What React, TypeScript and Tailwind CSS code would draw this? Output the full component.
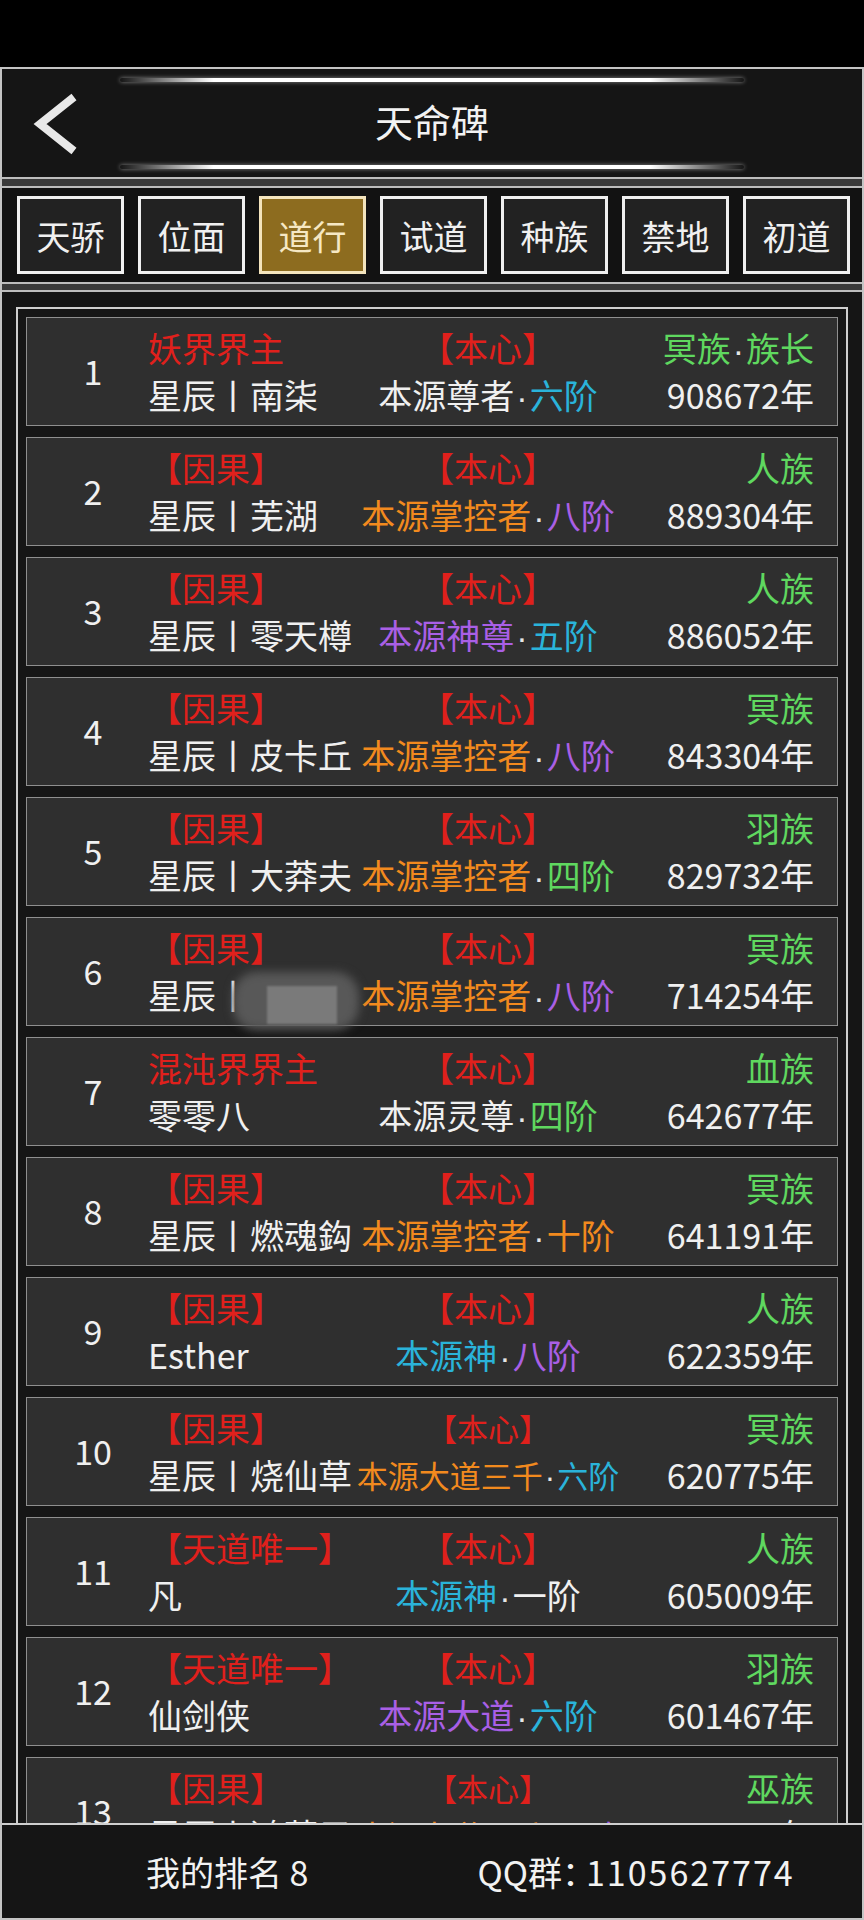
import React from "react";

type Seg = [string, string];

const RED = "text-[#e0201c]";
const GRN = "text-[#5fd85f]";
const CYN = "text-[#2ab3da]";
const ORG = "text-[#f28a1e]";
const PUR = "text-[#a95fe6]";
const WHT = "text-[#f0f0f0]";
const DOT = "dot";

interface RankRow {
  n: number;
  a: Seg[];
  b: Seg[];
  c: Seg[];
  d: Seg[];
  e: Seg[];
  f: Seg[];
  small?: boolean;
  blur?: boolean;
}

const yinguo: Seg[] = [["【因果】", RED]];
const benxin: Seg[] = [["【本心】", RED]];
const tiandao: Seg[] = [["【天道唯一】", RED]];
const dot: Seg = ["·", DOT];

const rows: RankRow[] = [
  { n: 1, a: [["妖界界主", RED]], b: benxin, c: [["冥族", GRN], dot, ["族长", GRN]], d: [["星辰丨南柒", WHT]], e: [["本源尊者", WHT], dot, ["六阶", CYN]], f: [["908672年", WHT]] },
  { n: 2, a: yinguo, b: benxin, c: [["人族", GRN]], d: [["星辰丨芜湖", WHT]], e: [["本源掌控者", ORG], dot, ["八阶", PUR]], f: [["889304年", WHT]] },
  { n: 3, a: yinguo, b: benxin, c: [["人族", GRN]], d: [["星辰丨零天樽", WHT]], e: [["本源神尊", PUR], dot, ["五阶", CYN]], f: [["886052年", WHT]] },
  { n: 4, a: yinguo, b: benxin, c: [["冥族", GRN]], d: [["星辰丨皮卡丘", WHT]], e: [["本源掌控者", ORG], dot, ["八阶", PUR]], f: [["843304年", WHT]] },
  { n: 5, a: yinguo, b: benxin, c: [["羽族", GRN]], d: [["星辰丨大莽夫", WHT]], e: [["本源掌控者", ORG], dot, ["四阶", GRN]], f: [["829732年", WHT]] },
  { n: 6, a: yinguo, b: benxin, c: [["冥族", GRN]], d: [["星辰丨", WHT]], e: [["本源掌控者", ORG], dot, ["八阶", PUR]], f: [["714254年", WHT]], blur: true },
  { n: 7, a: [["混沌界界主", RED]], b: benxin, c: [["血族", GRN]], d: [["零零八", WHT]], e: [["本源灵尊", WHT], dot, ["四阶", GRN]], f: [["642677年", WHT]] },
  { n: 8, a: yinguo, b: benxin, c: [["冥族", GRN]], d: [["星辰丨燃魂鈎", WHT]], e: [["本源掌控者", ORG], dot, ["十阶", ORG]], f: [["641191年", WHT]] },
  { n: 9, a: yinguo, b: benxin, c: [["人族", GRN]], d: [["Esther", WHT]], e: [["本源神", CYN], dot, ["八阶", PUR]], f: [["622359年", WHT]] },
  { n: 10, a: yinguo, b: benxin, c: [["冥族", GRN]], d: [["星辰丨烧仙草", WHT]], e: [["本源大道三千", ORG], dot, ["六阶", CYN]], f: [["620775年", WHT]], small: true },
  { n: 11, a: tiandao, b: benxin, c: [["人族", GRN]], d: [["凡", WHT]], e: [["本源神", CYN], dot, ["一阶", WHT]], f: [["605009年", WHT]] },
  { n: 12, a: tiandao, b: benxin, c: [["羽族", GRN]], d: [["仙剑侠", WHT]], e: [["本源大道", PUR], dot, ["六阶", CYN]], f: [["601467年", WHT]] },
  { n: 13, a: yinguo, b: benxin, c: [["巫族", GRN]], d: [["星辰丨鸿蒙子", WHT]], e: [["本源大道三千", ORG], dot, ["八阶", PUR]], f: [["598830年", WHT]], small: true },
];

const tabs = ["天骄", "位面", "道行", "试道", "种族", "禁地", "初道"];

function Segs({ segs }: { segs: Seg[] }) {
  return (
    <>
      {segs.map(([t, c], i) =>
        c === DOT ? (
          <span key={i} className="px-[2px] font-['Liberation_Sans',sans-serif] text-[#e6e6e6]">
            {t}
          </span>
        ) : (
          <span key={i} className={c}>
            {t}
          </span>
        ),
      )}
    </>
  );
}

function Row({ r }: { r: RankRow }) {
  return (
    <div className="relative flex h-[109px] shrink-0 border border-[#8f8f8f] bg-[#2f2f2f]">
      <div className="flex w-[121px] items-center justify-center pb-[2px] pl-[11px] text-[34px] text-[#f0f0f0]">
        {r.n}
      </div>
      <div className="grid flex-1 grid-cols-[202px_276px_1fr] grid-rows-[47px_47px] content-start whitespace-nowrap pr-[23px] pt-[6px] text-[34px] leading-[47px]">
        <div>
          <Segs segs={r.a} />
        </div>
        <div className={r.small ? "text-center text-[31px]" : "text-center"}>
          <Segs segs={r.b} />
        </div>
        <div className="text-right">
          <Segs segs={r.c} />
        </div>
        <div>
          <Segs segs={r.d} />
        </div>
        <div className={r.small ? "text-center text-[31px]" : "text-center"}>
          <Segs segs={r.e} />
        </div>
        <div className="text-right">
          <Segs segs={r.f} />
        </div>
      </div>
      {r.blur && (
        <div className="absolute left-[206px] top-[54px] h-[58px] w-[126px]">
          <div className="absolute inset-0 rounded-[24px] bg-[#585858] blur-[5px]" />
          <div className="absolute left-[34px] top-[14px] h-[38px] w-[70px] bg-[#7a7a7a] blur-[1px]" />
        </div>
      )}
    </div>
  );
}

function GlowLine() {
  return (
    <div className="mx-auto h-[4px] w-[624px] rounded-full bg-[linear-gradient(90deg,transparent,#ffffff_15%,#ffffff_85%,transparent)] shadow-[0_0_4px_rgba(255,255,255,0.5)]" />
  );
}

export default function App() {
  return (
    <div className="flex h-[1920px] w-[864px] flex-col bg-black font-['Noto_Sans_CJK_SC','Noto_Sans',sans-serif]">
      <div className="h-[67px] shrink-0 bg-black" />
      <div className="flex min-h-0 flex-1 flex-col border-2 border-[#c4c4c4] bg-[#151515]">
        {/* header */}
        <div className="relative flex h-[108px] shrink-0 flex-col justify-between pb-[8px] pt-[9px]">
          <GlowLine />
          <div className="flex items-center justify-center pb-[6px] text-[38px] leading-none text-[#f2f2f2]">天命碑</div>
          <GlowLine />
          <button className="absolute left-[30px] top-[24px]">
            <svg width="50" height="64" viewBox="0 0 50 64">
              <polyline points="42,4 8,31 42,58" fill="none" stroke="#e8e8e8" strokeWidth="8" strokeLinejoin="miter" />
            </svg>
          </button>
        </div>

        <div className="h-[11px] shrink-0 border-y-2 border-[#bdbdbd] bg-[#3a3a3a]" />

        {/* tabs */}
        <div className="flex h-[94px] shrink-0 items-center gap-[14px] bg-[#121212] pl-[15px]">
          {tabs.map((t) =>
            t === "道行" ? (
              <div
                key={t}
                className="flex h-[78px] w-[107px] items-center justify-center border-[3px] border-[#f3e4bd] bg-[#8d6c1f] text-[34px] text-[#f6e8c4]"
              >
                {t}
              </div>
            ) : (
              <div
                key={t}
                className="flex h-[78px] w-[107px] items-center justify-center border-[3px] border-[#f0f0f0] bg-[#222222] text-[34px] text-[#f0f0f0]"
              >
                {t}
              </div>
            ),
          )}
        </div>

        <div className="h-[10px] shrink-0 border-y-2 border-[#bdbdbd] bg-[#3a3a3a]" />

        {/* list */}
        <div className="flex min-h-0 flex-1 flex-col px-[14px] pt-[15px]">
          <div className="flex min-h-0 flex-1 flex-col gap-[11px] overflow-hidden border-2 border-b-0 border-[#cfcfcf] bg-[#161616] px-[8px] pt-[8px]">
            {rows.map((r) => (
              <Row key={r.n} r={r} />
            ))}
          </div>
        </div>

        {/* footer */}
        <div className="flex h-[95px] shrink-0 items-center border-t-2 border-[#cfcfcf] bg-[#151515] text-[34px] text-[#f2f2f2]">
          <div className="ml-[144px]">我的排名 8</div>
          <div className="ml-[169px]">
            QQ群<span className="mr-[-10px]">：</span>
            <span className="tracking-[2px]">1105627774</span>
          </div>
        </div>
      </div>
    </div>
  );
}
